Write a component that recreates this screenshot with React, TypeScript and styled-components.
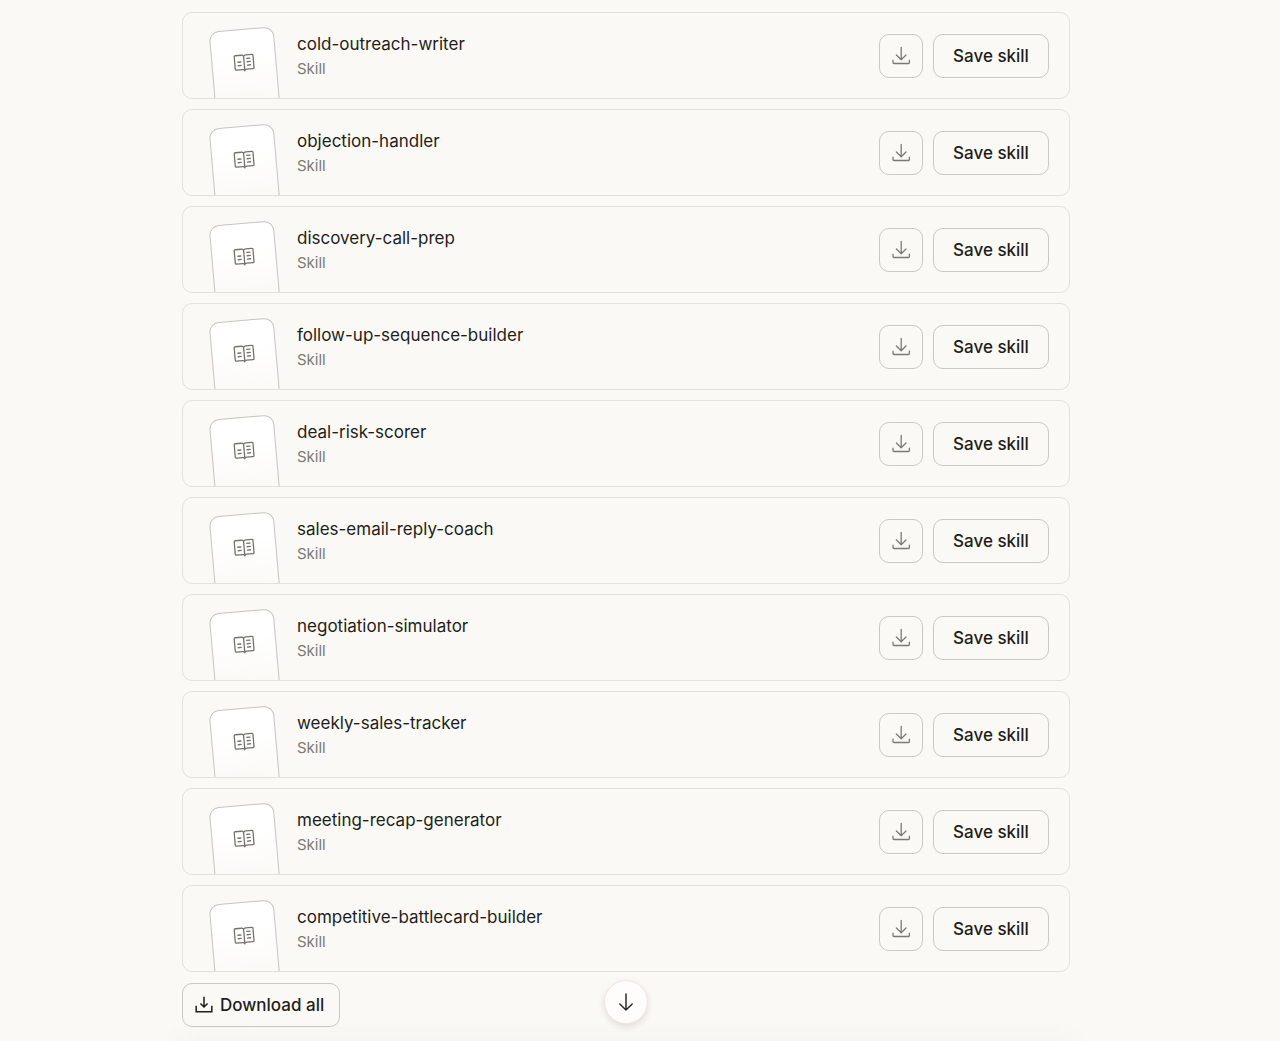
import React from "react";
import styled, { createGlobalStyle } from "styled-components";

const skills = [
  "cold-outreach-writer",
  "objection-handler",
  "discovery-call-prep",
  "follow-up-sequence-builder",
  "deal-risk-scorer",
  "sales-email-reply-coach",
  "negotiation-simulator",
  "weekly-sales-tracker",
  "meeting-recap-generator",
  "competitive-battlecard-builder",
];

const GlobalStyle = createGlobalStyle`
  *, *::before, *::after { box-sizing: border-box; }
  body {
    margin: 0;
    background: #faf9f5;
    color: #1f1e1b;
    font-family: Inter, "Liberation Sans", sans-serif;
  }
`;

const Page = styled.main`
  min-height: 100vh;
  padding: 12px 28px 0 0;
  display: flex;
  flex-direction: column;
  align-items: center;
`;

const Column = styled.div`
  width: 100%;
  max-width: 888px;
  flex: 1;
  display: flex;
  flex-direction: column;
  gap: 11px;
`;

const List = styled.ul`
  list-style: none;
  margin: 0;
  padding: 0;
  display: flex;
  flex-direction: column;
  gap: 10px;
`;

const Row = styled.li`
  display: flex;
  align-items: center;
  gap: 20px;
  min-height: 87px;
  padding: 0 20px 0 29px;
  border: 1px solid #e3e1db;
  border-radius: 10px;
  overflow: hidden;
`;

const ThumbSlot = styled.div`
  flex: none;
  width: 65px;
  height: 85px;
  padding-top: 16px;
`;

const Thumb = styled.div`
  height: 80px;
  padding-top: 22px;
  display: flex;
  justify-content: center;
  align-items: flex-start;
  border: 1px solid #c6c5c0;
  border-radius: 10px;
  background: linear-gradient(#ffffff 30%, #faf9f5);
  color: #73726c;
  transform: rotate(-5deg);
`;

const Info = styled.div`
  flex: 1;
  min-width: 0;
`;

const Title = styled.div`
  font-size: 17px;
  line-height: 26px;
`;

const Kind = styled.div`
  font-size: 15px;
  line-height: 24px;
  color: #7b7a75;
`;

const Actions = styled.div`
  display: flex;
  gap: 10px;
`;

const Button = styled.button<{ $square?: boolean; $compact?: boolean }>`
  display: inline-flex;
  align-items: center;
  justify-content: ${(p) => (p.$compact ? "flex-start" : "center")};
  gap: 7px;
  height: 44px;
  ${(p) => (p.$square ? "width: 44px;" : p.$compact ? "min-width: 158px;" : "min-width: 116px;")}
  padding: ${(p) => (p.$compact ? "0 14px 0 12px" : "0")};
  border: 1px solid #c9c8c2;
  border-radius: 10px;
  background: transparent;
  color: ${(p) => (p.$square ? "#7b7a75" : "#1f1e1b")};
  font: 500 17px/24px Inter, "Liberation Sans", sans-serif;
  cursor: pointer;
`;

const Footer = styled.footer`
  position: relative;
  flex: 1;
`;

const ScrollButton = styled.button`
  position: absolute;
  top: -3px;
  left: 50%;
  transform: translateX(-50%);
  display: flex;
  align-items: center;
  justify-content: center;
  width: 44px;
  height: 44px;
  padding: 0;
  border: 1px solid #f5e4df;
  border-radius: 50%;
  background: #fffdfc;
  color: #2b2a27;
  box-shadow: 0 3px 6px rgba(60, 40, 30, 0.12);
  cursor: pointer;
`;

const BottomShade = styled.div`
  position: absolute;
  left: -20px;
  right: -20px;
  bottom: 0;
  height: 20px;
  background: linear-gradient(rgba(60, 50, 20, 0), rgba(60, 50, 20, 0.02));
  mask-image: linear-gradient(90deg, transparent, #000 40px, #000 calc(100% - 40px), transparent);
  pointer-events: none;
`;

const BookIcon = () => (
  <svg width="22" height="22" viewBox="0 0 22 22" fill="none" stroke="currentColor" strokeWidth="1.3" strokeLinecap="round" strokeLinejoin="round" aria-hidden="true">
    <path d="M10.7 4.3C10.2 3.4 9.4 3 8.4 3H2.4c-.7 0-1.1.4-1.1 1.1v12.2c0 .7.4 1.1 1.1 1.1h6.400c.9 0 1.500.3 1.900 1 .4-.7 1-1 1.900-1h6.400c.7 0 1.100-.4 1.100-1.100V4.100c0-.7-.4-1.100-1.100-1.100h-6c-1 0-1.800.4-2.300 1.300zM10.700 4.300v14.600M4.500 9.700h3M4.500 13.200h3M13.700 6.700h3.200M13.700 10h3.200M13.700 13.300h3.200" />
  </svg>
);

const DownloadIcon = () => (
  <svg width="20" height="20" viewBox="0 0 20 20" fill="none" stroke="currentColor" strokeWidth="1.3" strokeLinecap="round" strokeLinejoin="round" aria-hidden="true">
    <path d="M10.2 1.5v12M5.4 9l4.8 4.7L15 9M2 14.2v2.3c0 .6.4 1 1 1h14.400c.6 0 1-.4 1-1v-2.300" />
  </svg>
);

const TrayIcon = () => (
  <svg width="18" height="18" viewBox="0 0 18 18" fill="none" stroke="currentColor" strokeWidth="1.5" aria-hidden="true">
    <path d="M9 .8v10.200M5.400 7.500 9 11l3.600-3.500M1.200 9.800v6h15.600v-6" />
  </svg>
);

const ArrowDownIcon = () => (
  <svg width="20" height="20" viewBox="0 0 20 20" fill="none" stroke="currentColor" strokeWidth="1.5" strokeLinecap="round" strokeLinejoin="round" aria-hidden="true">
    <path d="M10 2v16M3.800 12 10 18l6.200-6" />
  </svg>
);

function SkillRow({ name }: { name: string }) {
  return (
    <Row>
      <ThumbSlot>
        <Thumb>
          <BookIcon />
        </Thumb>
      </ThumbSlot>
      <Info>
        <Title>{name}</Title>
        <Kind>Skill</Kind>
      </Info>
      <Actions>
        <Button type="button" $square aria-label={`Download ${name}`}>
          <DownloadIcon />
        </Button>
        <Button type="button">Save skill</Button>
      </Actions>
    </Row>
  );
}

export default function App() {
  return (
    <>
      <GlobalStyle />
      <Page>
        <Column>
          <List>
            {skills.map((name) => (
              <SkillRow key={name} name={name} />
            ))}
          </List>
          <Footer>
            <Button type="button" $compact>
              <TrayIcon />
              Download all
            </Button>
            <ScrollButton type="button" aria-label="Scroll to bottom">
              <ArrowDownIcon />
            </ScrollButton>
            <BottomShade />
          </Footer>
        </Column>
      </Page>
    </>
  );
}
